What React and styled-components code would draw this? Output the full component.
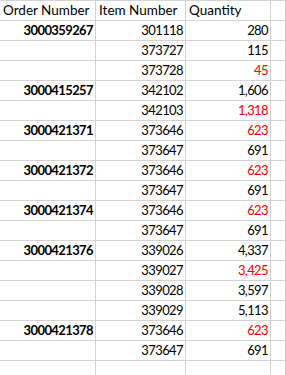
import React from "react";
import styled, { createGlobalStyle } from "styled-components";

const GLOBAL = createGlobalStyle`
  html, body {
    margin: 0;
    padding: 0;
    background: #ffffff;
  }
  body {
    font-family: Lato, "Open Sans", sans-serif;
    color: #000000;
  }
`;

const SHEET = styled.div`
  display: grid;
  grid-template-columns: 96px 90px 85px 1fr;
  grid-auto-rows: 20px;
  width: 286px;
  height: 375px;
  overflow: hidden;
  border-top: 1px solid #d4d4d4;
  font-size: 13px;
`;

const CELL = styled.div`
  display: flex;
  align-items: flex-end;
  justify-content: ${(p) => (p.$right ? "flex-end" : "flex-start")};
  padding: 0 2px 2px 3px;
  border-right: 1px solid #d4d4d4;
  border-bottom: 1px solid #d4d4d4;
  font-size: ${(p) => (p.$head ? "13.5px" : "13px")};
  font-weight: ${(p) => (p.$bold ? 700 : 400)};
  color: ${(p) => (p.$red ? "#ff0000" : "#000000")};
  letter-spacing: ${(p) => (p.$right ? "-0.6px" : "0")};
  white-space: nowrap;
  overflow: hidden;
  line-height: 16px;
`;

const rows = [
  ["3000359267", "301118", "280"],
  ["", "373727", "115"],
  ["", "373728", "45", true],
  ["3000415257", "342102", "1,606"],
  ["", "342103", "1,318", true],
  ["3000421371", "373646", "623", true],
  ["", "373647", "691"],
  ["3000421372", "373646", "623", true],
  ["", "373647", "691"],
  ["3000421374", "373646", "623", true],
  ["", "373647", "691"],
  ["3000421376", "339026", "4,337"],
  ["", "339027", "3,425", true],
  ["", "339028", "3,597"],
  ["", "339029", "5,113"],
  ["3000421378", "373646", "623", true],
  ["", "373647", "691"],
  ["", "", ""],
];

export default function App() {
  return (
    <>
      <GLOBAL />
      <SHEET>
        <CELL $head>Order Number</CELL>
        <CELL $head>Item Number</CELL>
        <CELL $head>Quantity</CELL>
        <CELL />
        {rows.map(([order, item, qty, red], i) => (
          <React.Fragment key={i}>
            <CELL $right $bold>{order}</CELL>
            <CELL $right>{item}</CELL>
            <CELL $right $red={red}>{qty}</CELL>
            <CELL />
          </React.Fragment>
        ))}
      </SHEET>
    </>
  );
}
